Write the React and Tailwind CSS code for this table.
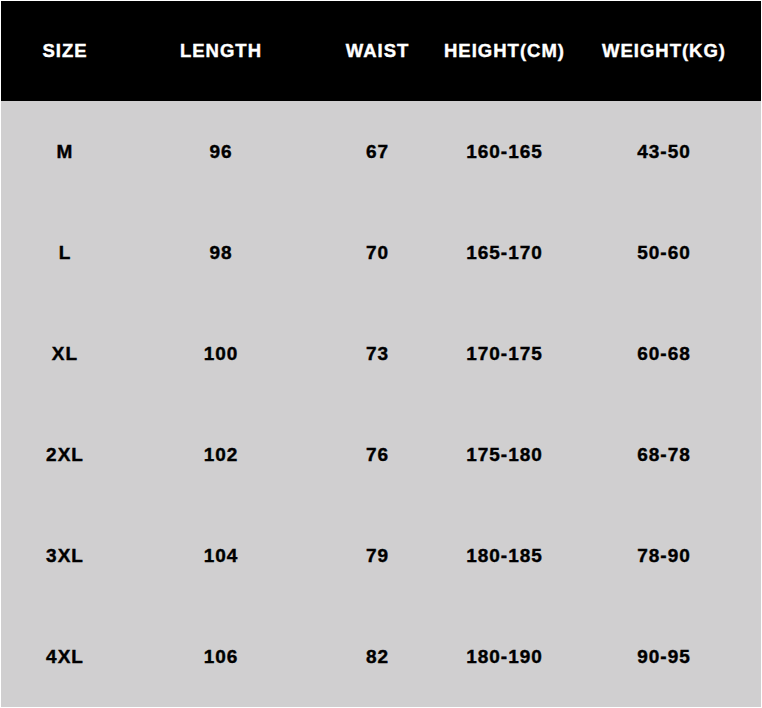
export default function App() {
  const headers = ["SIZE", "LENGTH", "WAIST", "HEIGHT(CM)", "WEIGHT(KG)"];
  const rows = [
    ["M", "96", "67", "160-165", "43-50"],
    ["L", "98", "70", "165-170", "50-60"],
    ["XL", "100", "73", "170-175", "60-68"],
    ["2XL", "102", "76", "175-180", "68-78"],
    ["3XL", "104", "79", "180-185", "78-90"],
    ["4XL", "106", "82", "180-190", "90-95"],
  ];
  const cols = "grid grid-cols-[128px_184px_129px_125px_194px]";
  return (
    <div
      className="w-[762px] h-[708px] bg-white pt-px px-px overflow-hidden"
      style={{ fontFamily: '"Liberation Sans", Arial, sans-serif' }}
    >
      <div className={`${cols} h-[100px] bg-black items-center`}>
        {headers.map((h) => (
          <div
            key={h}
            className="text-center text-white font-bold text-[18.5px] tracking-[1px] leading-none [-webkit-text-stroke:0.4px_white]"
          >
            {h}
          </div>
        ))}
      </div>
      <div className="bg-[#d0cfd0]">
        {rows.map((r, i) => (
          <div key={i} className={`${cols} h-[101px] items-center`}>
            {r.map((c, j) => (
              <div
                key={j}
                className="text-center text-black font-bold text-[19px] tracking-[1px] leading-none [-webkit-text-stroke:0.4px_black]"
              >
                {c}
              </div>
            ))}
          </div>
        ))}
      </div>
    </div>
  );
}
